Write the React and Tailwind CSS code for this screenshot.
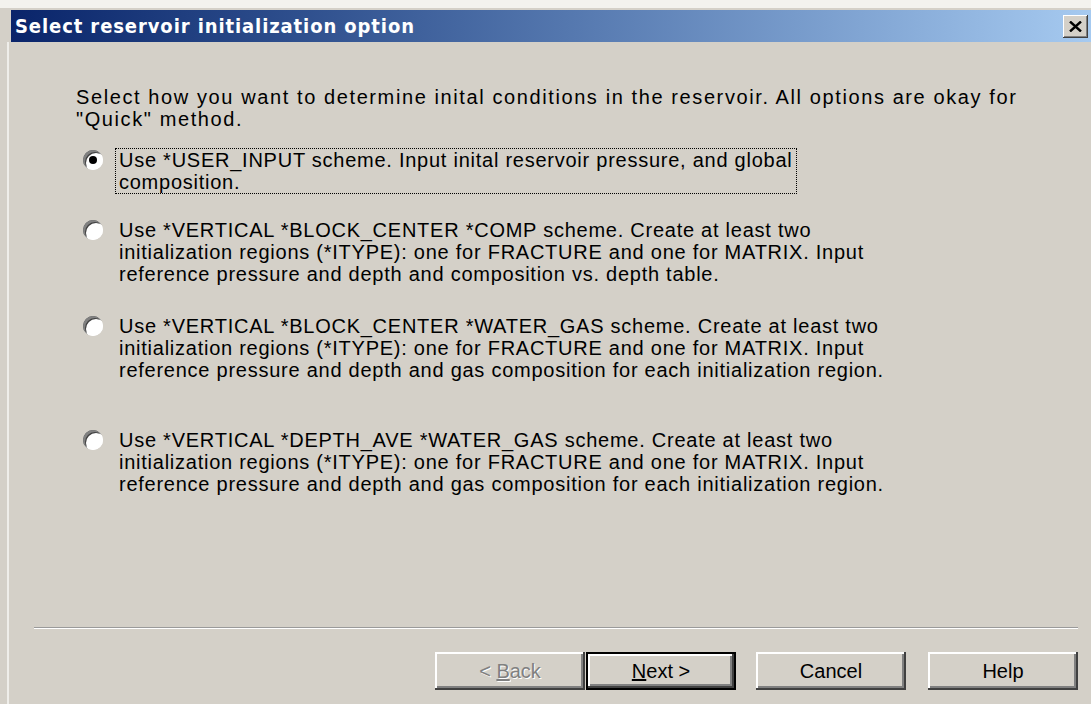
import React, { useState } from 'react';

const OPTIONS = [
  {
    id: 'user',
    lines: ['Use *USER_INPUT scheme. Input inital reservoir pressure, and global', 'composition.'],
    gap: 'mt-[18px]',
  },
  {
    id: 'comp',
    lines: [
      'Use *VERTICAL *BLOCK_CENTER *COMP scheme. Create at least two',
      'initialization regions (*ITYPE): one for FRACTURE and one for MATRIX. Input',
      'reference pressure and depth and composition vs. depth table.',
    ],
    gap: 'mt-[24px]',
  },
  {
    id: 'water_gas',
    lines: [
      'Use *VERTICAL *BLOCK_CENTER *WATER_GAS scheme. Create at least two',
      'initialization regions (*ITYPE): one for FRACTURE and one for MATRIX. Input',
      'reference pressure and depth and gas composition for each initialization region.',
    ],
    gap: 'mt-[28px]',
  },
  {
    id: 'depth_ave',
    lines: [
      'Use *VERTICAL *DEPTH_AVE *WATER_GAS scheme. Create at least two',
      'initialization regions (*ITYPE): one for FRACTURE and one for MATRIX. Input',
      'reference pressure and depth and gas composition for each initialization region.',
    ],
    gap: 'mt-[46px]',
  },
];

// Classic sunken radio button
const Radio = ({ checked }) => (
  <div className="w-[20px] h-[20px] rounded-full bg-white shadow-[inset_2px_2px_0_#808080,inset_-2px_-2px_0_#ffffff,inset_3px_3px_0_#404040] flex items-center justify-center shrink-0">
    {checked && <div className="w-[8px] h-[8px] rounded-full bg-black" />}
  </div>
);

const Option = ({ option, checked, focused, onSelect }) => (
  <div className={`flex items-start ${option.gap}`} onClick={onSelect}>
    <div className="w-[36px] h-[24px] pl-[4px] flex items-center">
      <Radio checked={checked} />
    </div>
    <div
      className={`px-[3px] border border-dotted whitespace-nowrap tracking-[0.75px] ${
        focused ? 'border-black' : 'border-transparent'
      }`}
    >
      {option.lines.map((line, i) => (
        <div key={i}>{line}</div>
      ))}
    </div>
  </div>
);

// Raised 3D push button
const Button = ({ children, isDefault, disabled }) => (
  <div
    className={`w-[150px] h-[38px] flex items-center justify-center ${
      isDefault ? 'border-2 border-black' : ''
    } bg-[#d4d0c8] shadow-[inset_-2px_-2px_0_#404040,inset_2px_2px_0_#ffffff,inset_-4px_-4px_0_#808080] ${
      disabled ? 'text-[#808080] [text-shadow:1px_1px_0_#ffffff]' : 'text-black'
    }`}
  >
    {children}
  </div>
);

const App = () => {
  const [selected, setSelected] = useState('user');

  return (
    <div className="w-[1091px] h-[704px] bg-[#d4d0c8] flex flex-col overflow-hidden font-['Liberation_Sans',Arial,sans-serif] text-[20px] leading-[22px] text-black">
      {/* Top edge */}
      <div className="h-[8px] bg-[#f3f2ee] shrink-0" />
      <div className="h-[2px] bg-[#d4d0c8] shrink-0" />

      {/* Title bar */}
      <div className="h-[32px] ml-[11px] flex items-center justify-between bg-gradient-to-r from-[#0a246a] to-[#a6caf0] shrink-0">
        <span className="pl-[4px] font-['DejaVu_Sans_Condensed','DejaVu_Sans',sans-serif] font-bold text-[20px] text-white tracking-[0.9px]">
          Select reservoir initialization option
        </span>
        <div className="w-[25px] h-[23px] mr-[3px] bg-[#d4d0c8] shadow-[inset_-1px_-1px_0_#404040,inset_1px_1px_0_#ffffff,inset_-2px_-2px_0_#808080] flex items-center justify-center">
          <svg width="13" height="11" viewBox="0 0 13 11">
            <path d="M1 0.5 L12 10.5 M12 0.5 L1 10.5" stroke="#000" strokeWidth="2.4" />
          </svg>
        </div>
      </div>

      {/* Dialog body */}
      <div className="flex-1 flex flex-col ml-[7px] border-l-2 border-[#efeeea]">
        <div className="pl-[67px] pt-[44px] flex flex-col">
          <p className="tracking-[1.6px] whitespace-nowrap">
            Select how you want to determine inital conditions in the reservoir. All options are okay for
            <br />
            "Quick" method.
          </p>
          <div className="pl-[3px] flex flex-col">
            {OPTIONS.map((opt) => (
              <Option
                key={opt.id}
                option={opt}
                checked={selected === opt.id}
                focused={opt.id === 'user'}
                onSelect={() => setSelected(opt.id)}
              />
            ))}
          </div>
        </div>

        <div className="flex-1" />

        {/* Separator */}
        <div className="ml-[25px] mr-[13px] h-[2px] border-t border-[#9a9a9a] border-b border-b-white" />

        {/* Wizard buttons */}
        <div className="flex justify-end items-center mt-[23px] mb-[14px] mr-[13px]">
          <Button disabled>
            &lt;&nbsp;<u>B</u>ack
          </Button>
          <div className="ml-[1px]">
            <Button isDefault>
              <u>N</u>ext &gt;
            </Button>
          </div>
          <div className="ml-[20px]">
            <Button>Cancel</Button>
          </div>
          <div className="ml-[22px]">
            <Button>Help</Button>
          </div>
        </div>
      </div>
    </div>
  );
};

export default App;
